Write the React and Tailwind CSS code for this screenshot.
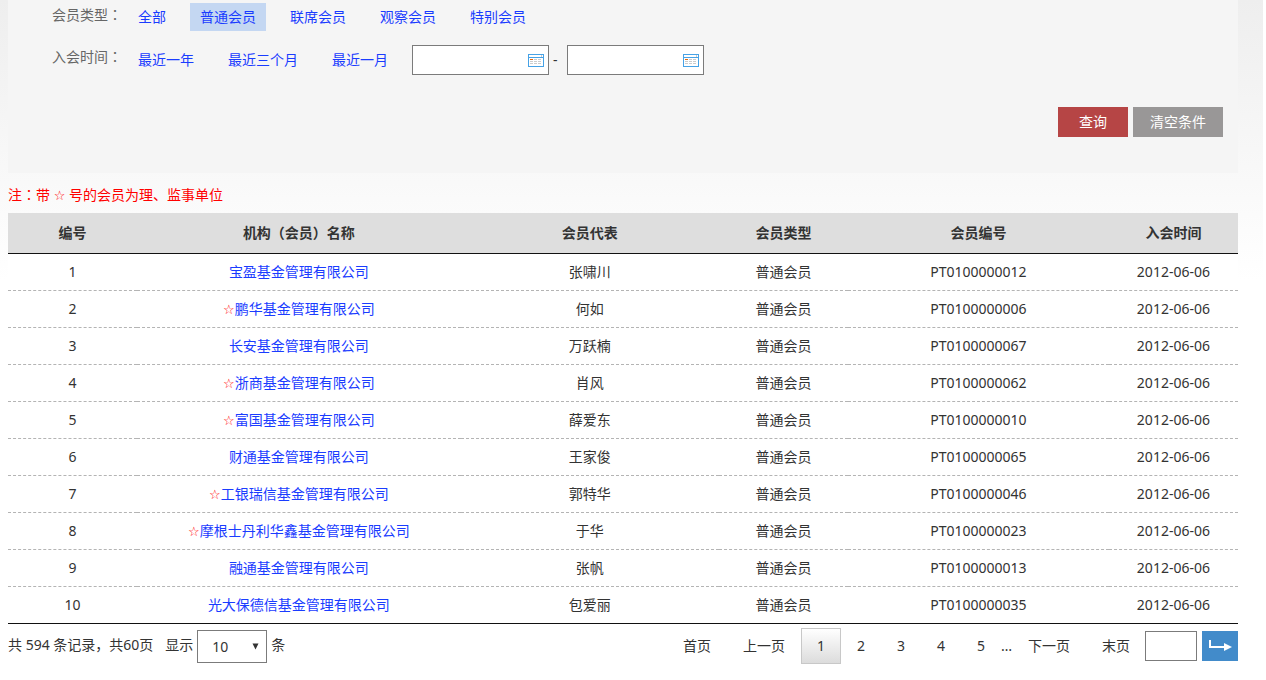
import { useState } from "react";

const types = ["全部", "普通会员", "联席会员", "观察会员", "特别会员"];
const periods = ["最近一年", "最近三个月", "最近一月"];

const members = [
  { name: "宝盈基金管理有限公司", star: false, person: "张啸川", code: "PT0100000012" },
  { name: "鹏华基金管理有限公司", star: true, person: "何如", code: "PT0100000006" },
  { name: "长安基金管理有限公司", star: false, person: "万跃楠", code: "PT0100000067" },
  { name: "浙商基金管理有限公司", star: true, person: "肖风", code: "PT0100000062" },
  { name: "富国基金管理有限公司", star: true, person: "薛爱东", code: "PT0100000010" },
  { name: "财通基金管理有限公司", star: false, person: "王家俊", code: "PT0100000065" },
  { name: "工银瑞信基金管理有限公司", star: true, person: "郭特华", code: "PT0100000046" },
  { name: "摩根士丹利华鑫基金管理有限公司", star: true, person: "于华", code: "PT0100000023" },
  { name: "融通基金管理有限公司", star: false, person: "张帆", code: "PT0100000013" },
  { name: "光大保德信基金管理有限公司", star: false, person: "包爱丽", code: "PT0100000035" },
];

function Star() {
  return <span className="font-['DejaVu_Sans'] text-[13px] leading-none text-[#ff0000]">☆</span>;
}

// the TC face centres the colon in its box
function Colon() {
  return (
    <span lang="zh-TW" className="font-['Noto_Sans_CJK_TC',sans-serif] leading-none">
      ：
    </span>
  );
}

function DateInput({ label, value, onChange }) {
  return (
    <div className="relative">
      <input
        type="text"
        aria-label={label}
        value={value}
        onChange={(e) => onChange(e.target.value)}
        className="block h-[30px] w-[137px] border border-[#7b7b7b] bg-white pl-2 pr-6 focus:outline-none"
      />
      <svg
        className="pointer-events-none absolute right-[5px] top-[9px]"
        width="16"
        height="13"
        viewBox="0 0 16 13"
        shapeRendering="crispEdges"
      >
        <rect x="0.5" y="0.5" width="15" height="12" fill="#fff" stroke="#46a2e6" />
        <path d="M1 3.5h14" stroke="#46a2e6" />
        <path d="M13.5 1v2" stroke="#ccc" />
        <path d="M2 5.5h3" stroke="#e8690b" />
        <path d="M6 5.5h3M10 5.5h3M2 7.5h3M6 7.5h3M10 7.5h3M2 9.5h3M6 9.5h3M10 9.5h3" stroke="#ccc" />
      </svg>
    </div>
  );
}

export default function App() {
  const [type, setType] = useState("普通会员");
  const [from, setFrom] = useState("");
  const [to, setTo] = useState("");
  const [size, setSize] = useState("10");
  const [page, setPage] = useState(1);
  const [target, setTarget] = useState("");

  const handleClear = () => {
    setType("全部");
    setFrom("");
    setTo("");
  };

  const handleJump = (e) => {
    e.preventDefault();
    if (Number(target) > 0) setPage(Number(target));
  };

  return (
    <div className="mr-[3px] bg-linear-to-b from-[#eeeeee] to-white to-[280px] pl-2 pr-[25px] font-['Noto_Sans','Noto_Sans_CJK_SC',sans-serif] text-sm text-[#333]">
      <form
        onSubmit={(e) => e.preventDefault()}
        className="flex flex-col bg-[#f5f5f5] pb-9 pt-[3px]"
      >
        <div className="flex items-start gap-[6px] pl-11">
          <span className="w-[70px] leading-6 text-[#666]">
            会员类型
            <Colon />
          </span>
          <div className="flex gap-[14px]">
            {types.map((item) => (
              <a
                key={item}
                href="#"
                onClick={() => setType(item)}
                className={`px-[10px] leading-7 text-[#1a3cff] ${item === type ? "bg-[#c4d7f2]" : ""}`}
              >
                {item}
              </a>
            ))}
          </div>
        </div>

        <div className="mt-[14px] flex items-start gap-[6px] pl-11">
          <span className="w-[70px] leading-6 text-[#666]">
            入会时间
            <Colon />
          </span>
          <div className="flex items-center gap-[14px]">
            {periods.map((item) => (
              <a key={item} href="#" className="px-[10px] leading-7 text-[#1a3cff]">
                {item}
              </a>
            ))}
            <div className="flex items-center">
              <DateInput label="开始日期" value={from} onChange={setFrom} />
              <span className="w-[18px] pl-1">-</span>
              <DateInput label="结束日期" value={to} onChange={setTo} />
            </div>
          </div>
        </div>

        <div className="mt-8 flex justify-end gap-[5px] pr-[15px]">
          <button type="submit" className="h-[30px] w-[70px] bg-[#b64545] text-white">
            查询
          </button>
          <button
            type="button"
            onClick={handleClear}
            className="h-[30px] w-[90px] bg-[#999797] text-white"
          >
            清空条件
          </button>
        </div>
      </form>

      <p className="pb-[6px] pt-[10px] leading-6 text-[#ff0000]">
        注
        <Colon />
        带 <Star /> 号的会员为理、监事单位
      </p>

      <table className="w-full table-fixed border-separate border-spacing-0 bg-white text-center">
        <colgroup>
          <col className="w-[10.5%]" />
          <col className="w-[26.3%]" />
          <col className="w-[21%]" />
          <col className="w-[10.5%]" />
          <col className="w-[21.2%]" />
          <col className="w-[10.5%]" />
        </colgroup>
        <thead>
          <tr className="h-[41px] bg-[#dedede] *:border-b *:border-[#111] *:p-0 *:font-bold">
            <th>编号</th>
            <th>机构（会员）名称</th>
            <th>会员代表</th>
            <th>会员类型</th>
            <th>会员编号</th>
            <th>入会时间</th>
          </tr>
        </thead>
        <tbody>
          {members.map((m, i) => (
            <tr
              key={m.code}
              className="h-[37px] *:border-b *:border-dashed *:border-[#b4b4b4] *:p-0 last:*:border-solid last:*:border-[#111]"
            >
              <td>{i + 1}</td>
              <td>
                {m.star && <Star />}
                <a href="#" className="text-[#1a3cff]">
                  {m.name}
                </a>
              </td>
              <td>{m.person}</td>
              <td>普通会员</td>
              <td>{m.code}</td>
              <td>2012-06-06</td>
            </tr>
          ))}
        </tbody>
      </table>

      <div className="flex items-start justify-between bg-white pb-4 pt-1">
        <div className="flex items-center pt-[2px]">
          <span className="pb-[3px]">共 594 条记录，共60页</span>
          <label htmlFor="size" className="pb-[3px] pl-3">
            显示
          </label>
          <div className="relative mx-1">
            <select
              id="size"
              value={size}
              onChange={(e) => setSize(e.target.value)}
              className="block h-[33px] w-[70px] appearance-none border border-[#7b7b7b] bg-white pl-[14px]"
            >
              <option>10</option>
              <option>20</option>
              <option>50</option>
            </select>
            <svg
              className="pointer-events-none absolute right-2 top-[13px]"
              width="7"
              height="7"
              viewBox="0 0 7 7"
            >
              <path d="M0.5 0.5h6L3.5 6.5z" fill="#333" />
            </svg>
          </div>
          <span className="pb-[3px]">条</span>
        </div>

        <form onSubmit={handleJump} className="flex items-center">
          <a href="#" className="px-4">首页</a>
          <a href="#" className="px-4">上一页</a>
          {[1, 2, 3, 4, 5].map((n) => (
            <a
              key={n}
              href="#"
              onClick={() => setPage(n)}
              className={`w-10 border text-center leading-[34px] ${
                n === page
                  ? "border-[#c8c8c8] bg-linear-to-b from-white to-[#dcdcdc]"
                  : "border-transparent"
              }`}
            >
              {n}
            </a>
          ))}
          <span>…</span>
          <a href="#" className="px-4">下一页</a>
          <a href="#" className="pl-4 pr-[15px]">末页</a>
          <input
            type="text"
            aria-label="页码"
            value={target}
            onChange={(e) => setTarget(e.target.value)}
            className="h-[30px] w-[52px] border border-[#7b7b7b] bg-white px-2 focus:outline-none"
          />
          <button
            type="submit"
            aria-label="跳转"
            className="ml-[5px] flex h-[30px] w-9 items-center justify-center bg-[#428bca]"
          >
            <svg width="23" height="13" viewBox="0 0 23 13">
              <path d="M1 0v7h15" fill="none" stroke="#fff" strokeWidth="2" />
              <path d="M15 3v8l8-4z" fill="#fff" />
            </svg>
          </button>
        </form>
      </div>
    </div>
  );
}
